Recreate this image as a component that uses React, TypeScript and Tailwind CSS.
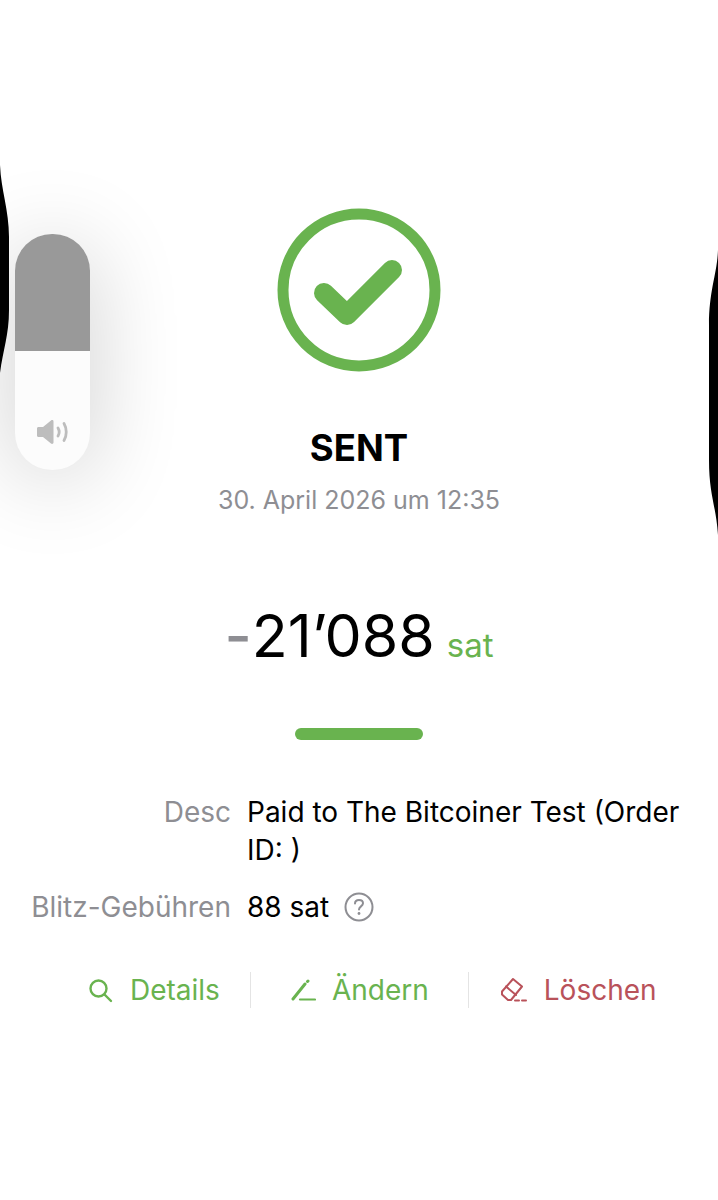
import React from 'react';

const GREEN = 'text-[#69b34f]';

const Divider = () => <div className="w-px h-9 bg-[#e4e4e4]" />;

const VolumeHud = () => (
  <div className="absolute left-[15px] top-[234px] w-[75px] h-[236px] rounded-[37px] overflow-hidden bg-[#fcfcfc] shadow-[0_10px_90px_rgba(0,0,0,0.2)]">
    <div className="h-[117px] bg-[#999999]" />
    <svg className="absolute left-[21px] top-[184px]" width="34" height="28" viewBox="0 0 34 28" fill="none">
      <path d="M1 10.5C1 9.7 1.6 9 2.5 9H7L15 2.5C16 1.7 17.5 2.2 17.5 3.5V24.5C17.5 25.8 16 26.3 15 25.5L7 19H2.5C1.6 19 1 18.3 1 17.5V10.5Z" fill="#bdbdbd" />
      <path d="M22 10C23.5 12.5 23.5 15.5 22 18" stroke="#bdbdbd" strokeWidth="2.8" strokeLinecap="round" />
      <path d="M28 5.5C31 10.5 31 17.5 28 22.5" stroke="#bdbdbd" strokeWidth="2.8" strokeLinecap="round" />
    </svg>
  </div>
);

export default function App() {
  return (
    <div className="relative w-[718px] h-[1200px] overflow-hidden bg-white font-['Inter','Liberation_Sans',sans-serif] text-black">
      {/* phone edges showing through the shot */}
      <svg className="absolute left-0 top-[165px]" width="12" height="210" viewBox="0 0 12 210">
        <path d="M0 0C1 25 9 45 9 72V145C9 170 3 185 0 208Z" fill="#000" />
      </svg>
      <svg className="absolute right-0 top-[245px]" width="12" height="295" viewBox="0 0 12 295">
        <path d="M12 5C11 30 3 45 3 80V215C3 250 10 260 12 290Z" fill="#000" />
      </svg>
      <VolumeHud />

      <div className="flex flex-col items-center pt-[208px]">
        <svg width="164" height="164" viewBox="0 0 164 164" fill="none">
          <circle cx="82" cy="82" r="76" stroke="#69b34f" strokeWidth="11" />
          <path d="M47 85L70 107L115 62" stroke="#69b34f" strokeWidth="20" strokeLinecap="round" strokeLinejoin="round" />
        </svg>
        <h1 className="mt-[54px] text-[36.5px] leading-[44px] font-bold">SENT</h1>
        <p className="mt-[15px] text-[25px] leading-[30px] text-[#8e8e93]">30. April 2026 um 12:35</p>

        <div className="mt-[85px] flex items-baseline h-[72px]">
          <span className="text-[59px] leading-[72px] text-[#8e8e93] font-medium">-</span>
          <span className="text-[59px] leading-[72px]">21’088</span>
          <span className={`ml-[12px] text-[33px] ${GREEN}`}>sat</span>
        </div>

        <div className="mt-[56px] w-[128px] h-3 rounded-full bg-[#69b34f]" />

        <div className="mt-[53px] w-full grid grid-cols-[231px_1fr] gap-x-4 gap-y-[19px] text-[28px] leading-[38px] pr-[30px]">
          <span className="text-right text-[#8e8e93]">Desc</span>
          <span>Paid to The Bitcoiner Test (Order ID: )</span>
          <span className="text-right text-[#8e8e93] whitespace-nowrap">Blitz-Gebühren</span>
          <span className="flex items-center gap-[15px]">
            88 sat
            <svg width="30" height="30" viewBox="0 0 30 30" fill="none">
              <circle cx="15" cy="15" r="13.5" stroke="#8e8e93" strokeWidth="2" />
              <path d="M11 11.5C11 9.3 12.8 8 15 8C17.2 8 19 9.3 19 11.3C19 14.3 15 14.5 15 17.5" stroke="#8e8e93" strokeWidth="2" strokeLinecap="round" />
              <circle cx="15" cy="21.5" r="1.4" fill="#8e8e93" />
            </svg>
          </span>
        </div>

        <div className="mt-[46px] flex items-center text-[28px] leading-9 self-start ml-[88px]">
          <div className={`flex items-center gap-[17px] ${GREEN}`}>
            <svg width="25" height="25" viewBox="0 0 25 25" fill="none" stroke="#69b34f" strokeWidth="2.4" strokeLinecap="round">
              <circle cx="10.5" cy="10.5" r="8" />
              <path d="M16.5 16.5L23 23" />
            </svg>
            Details
          </div>
          <div className="ml-[30px] mr-[40px]"><Divider /></div>
          <div className={`flex items-center gap-[16px] ${GREEN}`}>
            <svg width="25" height="22" viewBox="0 0 25 22" fill="none" stroke="#69b34f" strokeLinecap="round">
              <path d="M2 20L14 5" strokeWidth="3" />
              <path d="M16.5 2.5L17 2" strokeWidth="3" />
              <path d="M9 20.5H24" strokeWidth="2.2" />
            </svg>
            Ändern
          </div>
          <div className="ml-[39px] mr-[31px]"><Divider /></div>
          <div className="flex items-center gap-[16px] text-[#b9525a]">
            <svg width="28" height="26" viewBox="0 0 28 26" fill="none" stroke="#b9525a" strokeWidth="2" strokeLinecap="round" strokeLinejoin="round">
              <path d="M2 14.5L13 2L22 9.5L11 23L8 23L2 17.5Z" />
              <path d="M6 9.5L16 18" />
              <path d="M15 23.5H19" />
              <path d="M22 23.5H26" />
            </svg>
            Löschen
          </div>
        </div>
      </div>
    </div>
  );
}
